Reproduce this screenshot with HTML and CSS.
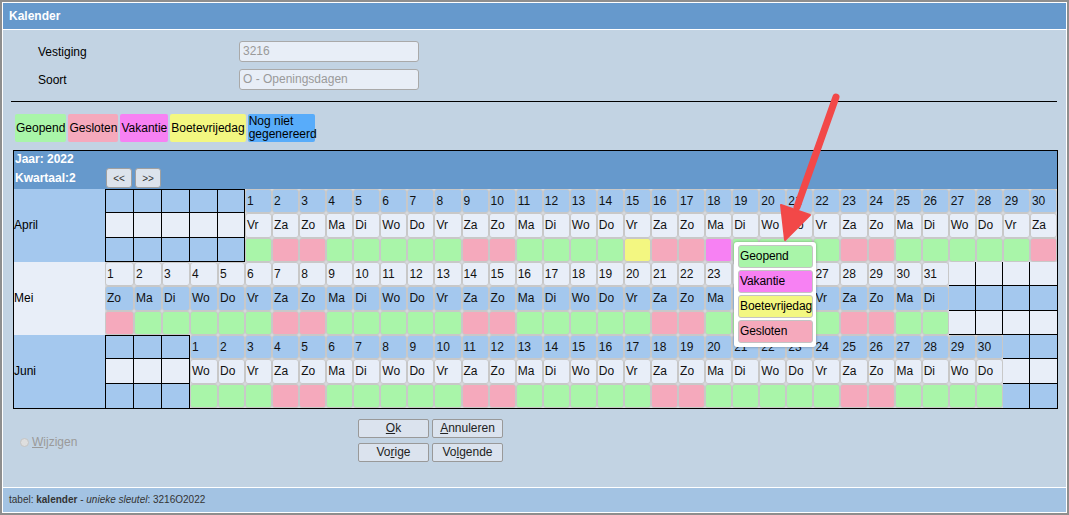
FILE: index.html
```html
<!DOCTYPE html>
<html lang="nl">
<head>
<meta charset="utf-8">
<title>Kalender</title>
<link rel="stylesheet" href="styles.css">
</head>
<body>
<div class="dialog">
  <div class="titlebar">Kalender</div>
  <div class="main">
    <div class="form">
      <div class="lbl">Vestiging</div><div class="field">3216</div>
      <div class="lbl">Soort</div><div class="field">O - Openingsdagen</div>
    </div>
    <div class="rule"></div>
    <div class="legend">
      <div class="lg g">Geopend</div>
      <div class="lg p">Gesloten</div>
      <div class="lg v">Vakantie</div>
      <div class="lg y">Boetevrijedag</div>
      <div class="lg n nog">Nog niet gegenereerd</div>
    </div>
    <div class="cal">
      <div class="cal-head">
        <div class="hrow1">Jaar: 2022</div>
        <div class="hrow2"><span class="kw">Kwartaal:2</span><span class="nav">&lt;&lt;</span><span class="nav">&gt;&gt;</span></div>
      </div>
      <div class="grid">
        <!-- April -->
        <div class="m b">April</div>
        <div class="x b bl bt"></div><div class="x b bt"></div><div class="x b bt"></div><div class="x b bt"></div><div class="x b bt"></div>
        <div class="c b">1</div><div class="c b">2</div><div class="c b">3</div><div class="c b">4</div><div class="c b">5</div><div class="c b">6</div><div class="c b">7</div><div class="c b">8</div><div class="c b">9</div><div class="c b">10</div><div class="c b">11</div><div class="c b">12</div><div class="c b">13</div><div class="c b">14</div><div class="c b">15</div><div class="c b">16</div><div class="c b">17</div><div class="c b">18</div><div class="c b">19</div><div class="c b">20</div><div class="c b">21</div><div class="c b">22</div><div class="c b">23</div><div class="c b">24</div><div class="c b">25</div><div class="c b">26</div><div class="c b">27</div><div class="c b">28</div><div class="c b">29</div><div class="c b">30</div>
        <div class="x l bl"></div><div class="x l"></div><div class="x l"></div><div class="x l"></div><div class="x l"></div>
        <div class="c l">Vr</div><div class="c l">Za</div><div class="c l">Zo</div><div class="c l">Ma</div><div class="c l">Di</div><div class="c l">Wo</div><div class="c l">Do</div><div class="c l">Vr</div><div class="c l">Za</div><div class="c l">Zo</div><div class="c l">Ma</div><div class="c l">Di</div><div class="c l">Wo</div><div class="c l">Do</div><div class="c l">Vr</div><div class="c l">Za</div><div class="c l">Zo</div><div class="c l">Ma</div><div class="c l">Di</div><div class="c l">Wo</div><div class="c l">Do</div><div class="c l">Vr</div><div class="c l">Za</div><div class="c l">Zo</div><div class="c l">Ma</div><div class="c l">Di</div><div class="c l">Wo</div><div class="c l">Do</div><div class="c l">Vr</div><div class="c l">Za</div>
        <div class="x b bl"></div><div class="x b"></div><div class="x b"></div><div class="x b"></div><div class="x b"></div>
        <div class="c g"></div><div class="c p"></div><div class="c p"></div><div class="c g"></div><div class="c g"></div><div class="c g"></div><div class="c g"></div><div class="c g"></div><div class="c p"></div><div class="c p"></div><div class="c g"></div><div class="c g"></div><div class="c g"></div><div class="c g"></div><div class="c y"></div><div class="c p"></div><div class="c p"></div><div class="c v"></div><div class="c g"></div><div class="c g"></div><div class="c g"></div><div class="c g"></div><div class="c p"></div><div class="c p"></div><div class="c g"></div><div class="c g"></div><div class="c g"></div><div class="c g"></div><div class="c g"></div><div class="c p"></div>
        <!-- Mei -->
        <div class="m l">Mei</div>
        <div class="c l">1</div><div class="c l">2</div><div class="c l">3</div><div class="c l">4</div><div class="c l">5</div><div class="c l">6</div><div class="c l">7</div><div class="c l">8</div><div class="c l">9</div><div class="c l">10</div><div class="c l">11</div><div class="c l">12</div><div class="c l">13</div><div class="c l">14</div><div class="c l">15</div><div class="c l">16</div><div class="c l">17</div><div class="c l">18</div><div class="c l">19</div><div class="c l">20</div><div class="c l">21</div><div class="c l">22</div><div class="c l">23</div><div class="c l">24</div><div class="c l">25</div><div class="c l">26</div><div class="c l">27</div><div class="c l">28</div><div class="c l">29</div><div class="c l">30</div><div class="c l">31</div>
        <div class="x l"></div><div class="x l"></div><div class="x l"></div><div class="x l nr"></div>
        <div class="c b">Zo</div><div class="c b">Ma</div><div class="c b">Di</div><div class="c b">Wo</div><div class="c b">Do</div><div class="c b">Vr</div><div class="c b">Za</div><div class="c b">Zo</div><div class="c b">Ma</div><div class="c b">Di</div><div class="c b">Wo</div><div class="c b">Do</div><div class="c b">Vr</div><div class="c b">Za</div><div class="c b">Zo</div><div class="c b">Ma</div><div class="c b">Di</div><div class="c b">Wo</div><div class="c b">Do</div><div class="c b">Vr</div><div class="c b">Za</div><div class="c b">Zo</div><div class="c b">Ma</div><div class="c b">Di</div><div class="c b">Wo</div><div class="c b">Do</div><div class="c b">Vr</div><div class="c b">Za</div><div class="c b">Zo</div><div class="c b">Ma</div><div class="c b">Di</div>
        <div class="x b"></div><div class="x b"></div><div class="x b"></div><div class="x b nr"></div>
        <div class="c p"></div><div class="c g"></div><div class="c g"></div><div class="c g"></div><div class="c g"></div><div class="c g"></div><div class="c p"></div><div class="c p"></div><div class="c g"></div><div class="c g"></div><div class="c g"></div><div class="c g"></div><div class="c g"></div><div class="c p"></div><div class="c p"></div><div class="c g"></div><div class="c g"></div><div class="c g"></div><div class="c g"></div><div class="c g"></div><div class="c p"></div><div class="c p"></div><div class="c g"></div><div class="c g"></div><div class="c g"></div><div class="c g"></div><div class="c g"></div><div class="c p"></div><div class="c p"></div><div class="c g"></div><div class="c g"></div>
        <div class="x l"></div><div class="x l"></div><div class="x l"></div><div class="x l nr"></div>
        <!-- Juni -->
        <div class="m b">Juni</div>
        <div class="x b bl bt"></div><div class="x b bt"></div><div class="x b bt"></div>
        <div class="c b">1</div><div class="c b">2</div><div class="c b">3</div><div class="c b">4</div><div class="c b">5</div><div class="c b">6</div><div class="c b">7</div><div class="c b">8</div><div class="c b">9</div><div class="c b">10</div><div class="c b">11</div><div class="c b">12</div><div class="c b">13</div><div class="c b">14</div><div class="c b">15</div><div class="c b">16</div><div class="c b">17</div><div class="c b">18</div><div class="c b">19</div><div class="c b">20</div><div class="c b">21</div><div class="c b">22</div><div class="c b">23</div><div class="c b">24</div><div class="c b">25</div><div class="c b">26</div><div class="c b">27</div><div class="c b">28</div><div class="c b">29</div><div class="c b">30</div>
        <div class="x b"></div><div class="x b nr"></div>
        <div class="x l bl"></div><div class="x l"></div><div class="x l"></div>
        <div class="c l">Wo</div><div class="c l">Do</div><div class="c l">Vr</div><div class="c l">Za</div><div class="c l">Zo</div><div class="c l">Ma</div><div class="c l">Di</div><div class="c l">Wo</div><div class="c l">Do</div><div class="c l">Vr</div><div class="c l">Za</div><div class="c l">Zo</div><div class="c l">Ma</div><div class="c l">Di</div><div class="c l">Wo</div><div class="c l">Do</div><div class="c l">Vr</div><div class="c l">Za</div><div class="c l">Zo</div><div class="c l">Ma</div><div class="c l">Di</div><div class="c l">Wo</div><div class="c l">Do</div><div class="c l">Vr</div><div class="c l">Za</div><div class="c l">Zo</div><div class="c l">Ma</div><div class="c l">Di</div><div class="c l">Wo</div><div class="c l">Do</div>
        <div class="x l"></div><div class="x l nr"></div>
        <div class="x b bl nb"></div><div class="x b nb"></div><div class="x b nb"></div>
        <div class="c g"></div><div class="c g"></div><div class="c g"></div><div class="c p"></div><div class="c p"></div><div class="c g"></div><div class="c g"></div><div class="c g"></div><div class="c g"></div><div class="c g"></div><div class="c p"></div><div class="c p"></div><div class="c g"></div><div class="c g"></div><div class="c g"></div><div class="c g"></div><div class="c g"></div><div class="c p"></div><div class="c p"></div><div class="c g"></div><div class="c g"></div><div class="c g"></div><div class="c g"></div><div class="c g"></div><div class="c p"></div><div class="c p"></div><div class="c g"></div><div class="c g"></div><div class="c g"></div><div class="c g"></div>
        <div class="x b nb"></div><div class="x b nb nr"></div>
      </div>
    </div>
    <div class="bottom">
      <div class="radio-area"><span class="radio"></span><span class="radio-lbl"><u>W</u>ijzigen</span></div>
      <div class="buttons">
        <div class="btn"><u>O</u>k</div>
        <div class="btn"><u>A</u>nnuleren</div>
        <div class="btn">Vo<u>r</u>ige</div>
        <div class="btn">Vo<u>l</u>gende</div>
      </div>
    </div>
  </div>
  <div class="footer">tabel: <b>kalender</b> - <i>unieke sleutel</i>: 3216O2022</div>
</div>

<div class="popup">
  <div class="pi g">Geopend</div>
  <div class="pi v">Vakantie</div>
  <div class="pi y">Boetevrijedag</div>
  <div class="pi p">Gesloten</div>
</div>

<svg class="arrow" width="1069" height="515" viewBox="0 0 1069 515">
  <line x1="836" y1="97" x2="797" y2="207" stroke="#f24848" stroke-width="7" stroke-linecap="round"/>
  <polygon points="785,240 781,205 810,215" fill="#f24848" stroke="#f24848" stroke-width="2" stroke-linejoin="round"/>
</svg>
</body>
</html>
```
FILE: styles.css
```css
* { box-sizing: border-box; }
html, body { margin: 0; padding: 0; }
body {
  width: 1069px;
  height: 515px;
  background: #8e8e8e;
  font-family: "Liberation Sans", Arial, sans-serif;
  font-size: 12px;
  color: #000;
  position: relative;
  overflow: hidden;
}
.dialog {
  margin: 2px 0 0 2px;
  width: 1065px;
  height: 511px;
  border: 1px solid #fff;
  background: #c2d3e3;
  display: flex;
  flex-direction: column;
}
.titlebar {
  height: 27px;
  background: #6699cc;
  border-bottom: 1px solid #fff;
  color: #fff;
  font-weight: bold;
  padding-left: 6px;
  line-height: 26px;
}
.main { height: 457px; }
.form {
  margin: 11px 0 0 35px;
  display: grid;
  grid-template-columns: 201px 180px;
  row-gap: 7px;
  align-items: center;
}
.field {
  height: 21px;
  border: 1px solid #a9a9a9;
  border-radius: 3px;
  background: #e8eef7;
  color: #9a9a9a;
  padding-left: 3px;
  line-height: 19px;
}
.rule { margin: 11px 9px 0 8px; height: 1px; background: #000; }
.legend { margin: 12px 0 0 12px; display: flex; gap: 2px; height: 28px; }
.lg { display: flex; align-items: center; padding: 0 1px 0 1px; border-radius: 2px; }
.nog { width: 67px; line-height: 13px; }
.g { background: #a9f5a9; }
.p { background: #f5a9bc; }
.v { background: #f781f3; }
.y { background: #f3f781; }
.n { background: #58acfa; }
.b { background: #a4c8ee; }
.l { background: #e8eef8; }

.cal { margin: 8px 0 0 10px; width: 1045px; border: 1px solid #000; }
.cal-head { background: #6699cc; color: #fff; font-weight: bold; }
.hrow1 { height: 16px; line-height: 17px; padding-left: 1px; }
.hrow2 { height: 22px; display: flex; align-items: center; gap: 3px; }
.kw { width: 89px; padding-left: 1px; }
.nav {
  width: 26px;
  height: 20px;
  background: #dce3ec;
  border: 1px solid #a0a0a0;
  border-radius: 3px;
  color: #333;
  font-weight: normal;
  font-size: 10px;
  display: flex;
  align-items: center;
  justify-content: center;
}
.grid {
  display: grid;
  grid-template-columns: 91px 29px 28px 28px 28px 27px repeat(30, 1fr);
  grid-template-rows: repeat(9, 24.33px);
  background: #d6d8dc;
}
.m { grid-row: span 3; display: flex; align-items: center; padding-left: 0; }
.c {
  border: 1px solid #c8c8c8;
  border-radius: 3px;
  padding: 0 0 0 1px;
  display: flex;
  align-items: center;
  white-space: nowrap;
  overflow: hidden;
  color: #111;
}
.x { border-right: 1px solid #000; border-bottom: 1px solid #000; }
.bl { border-left: 1px solid #000; }
.bt { border-top: 1px solid #000; }
.nr { border-right: 0; }
.nb { border-bottom: 0; }

.bottom { margin-top: 10px; display: flex; }
.radio-area {
  width: 355px;
  padding: 4px 0 0 17px;
  display: flex;
  align-items: center;
  gap: 3px;
  color: #9a9a9a;
}
.radio {
  width: 9px;
  height: 9px;
  border-radius: 50%;
  background: #dedede;
  border: 1px solid #c4c4c4;
}
.buttons { display: grid; grid-template-columns: 71px 71px; gap: 5px 3px; }
.btn {
  height: 19px;
  background: #dbe3ee;
  border: 1px solid #999;
  border-radius: 2px;
  text-align: center;
  line-height: 17px;
  color: #222;
}
.footer {
  height: 25px;
  border-top: 1px solid #fff;
  background: #a3c3e3;
  font-size: 10px;
  color: #333;
  padding-left: 6px;
  line-height: 24px;
}

.popup {
  position: absolute;
  left: 734px;
  top: 242px;
  width: 82px;
  padding: 3px 3px 4px 4px;
  background: #fff;
  border-radius: 3px;
  box-shadow: 0 0 3px rgba(0, 0, 0, 0.35);
  display: flex;
  flex-direction: column;
  gap: 2px;
}
.pi {
  height: 23px;
  border: 1px solid #c4c4c4;
  border-radius: 3px;
  padding-left: 1px;
  line-height: 21px;
  white-space: nowrap;
  letter-spacing: -0.1px;
}
.arrow { position: absolute; left: 0; top: 0; pointer-events: none; }
```
